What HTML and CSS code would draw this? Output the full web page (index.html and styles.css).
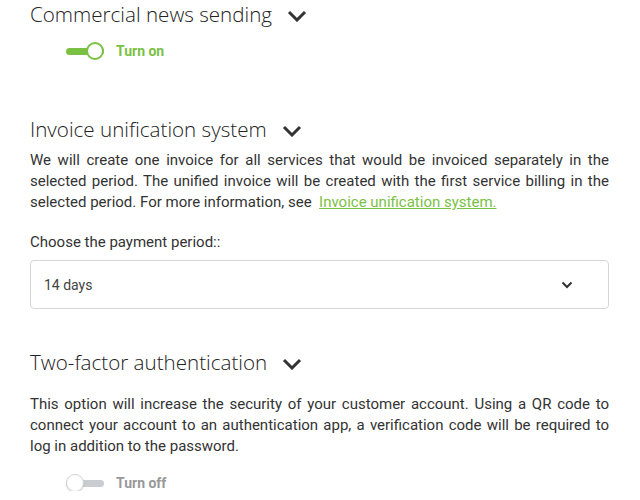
FILE: index.html
```html
<!DOCTYPE html>
<html lang="en">
<head>
    <meta charset="UTF-8">
    <meta name="viewport" content="width=device-width, initial-scale=1.0">
    <title>Account settings</title>
    <link rel="stylesheet" href="styles.css">
</head>
<body>
    <section class="setting" id="news">
        <h2 class="setting-title">Commercial news sending
            <svg class="chevron" viewBox="0 0 20 12" width="20" height="12"><path d="M2 2l8 8 8-8" fill="none" stroke="#333" stroke-width="3"/></svg>
        </h2>
        <label class="switch on">
            <span class="track"><span class="knob"></span></span>
            <span class="switch-label">Turn on</span>
        </label>
    </section>

    <section class="setting" id="invoice">
        <h2 class="setting-title">Invoice unification system
            <svg class="chevron" viewBox="0 0 20 12" width="20" height="12"><path d="M2 2l8 8 8-8" fill="none" stroke="#333" stroke-width="3"/></svg>
        </h2>
        <p class="text">We will create one invoice for all services that would be invoiced separately in the selected period. The unified invoice will be created with the first service billing in the selected period. For more information, see &nbsp;<a href="#">Invoice unification system.</a></p>
        <div class="field">
            <label for="period">Choose the payment period::</label>
            <div class="select" id="period">
                <span>14 days</span>
                <svg viewBox="0 0 12 8" width="12" height="8"><path d="M1.5 1.5l4.5 4.5 4.5-4.5" fill="none" stroke="#333" stroke-width="2"/></svg>
            </div>
        </div>
    </section>

    <section class="setting" id="twofactor">
        <h2 class="setting-title">Two-factor authentication
            <svg class="chevron" viewBox="0 0 20 12" width="20" height="12"><path d="M2 2l8 8 8-8" fill="none" stroke="#333" stroke-width="3"/></svg>
        </h2>
        <p class="text">This option will increase the security of your customer account. Using a QR code to connect your account to an authentication app, a verification code will be required to log in addition to the password.</p>
        <label class="switch">
            <span class="track"><span class="knob"></span></span>
            <span class="switch-label">Turn off</span>
        </label>
    </section>
</body>
</html>
```

FILE: styles.css
```css
body {
    font-family: Roboto, Arial, sans-serif;
    font-size: 14px;
    color: #333;
    margin: 0;
    padding: 0 31px 0 30px;
}

.setting-title {
    font-family: "Open Sans", sans-serif;
    font-weight: 300;
    font-size: 20.6px;
    color: #222;
    margin: 0;
    line-height: 30px;
    display: flex;
    align-items: center;
}

.chevron {
    margin-left: 15px;
    margin-top: 4px;
}

#news .setting-title {
    margin-top: -1px;
}

#invoice {
    margin-top: 55px;
}

#twofactor {
    margin-top: 38px;
}

.text {
    margin: 6px 0 0;
    font-size: 15px;
    line-height: 21px;
    text-align: justify;
}

#twofactor .text {
    margin-top: 17px;
}

.text a {
    color: #7ac143;
}

.switch {
    display: flex;
    align-items: center;
    margin: 14px 0 0 36px;
}

#twofactor .switch {
    margin-top: 18px;
}

.track {
    width: 38px;
    height: 7px;
    border-radius: 4px;
    background: #c9ccd0;
    position: relative;
    display: inline-block;
}

.knob {
    position: absolute;
    top: -6px;
    left: 0;
    width: 16px;
    height: 16px;
    border-radius: 50%;
    background: #fff;
    border: 1px solid #d4d4d4;
    box-shadow: 0 1px 2px rgba(0, 0, 0, 0.15);
}

.switch.on .track {
    background: #7ac143;
}

.switch.on .knob {
    left: auto;
    right: 0;
    border: 2px solid #7ac143;
    width: 14px;
    height: 14px;
    box-shadow: none;
}

.switch-label {
    margin-left: 12px;
    font-weight: bold;
    color: #999;
}

.switch.on .switch-label {
    color: #7ac143;
}

.field {
    margin-top: 20px;
}

.field label {
    display: block;
    font-size: 15px;
    line-height: 18px;
    margin-bottom: 9px;
}

.select {
    border: 1px solid #d6d6d6;
    border-radius: 4px;
    height: 47px;
    display: flex;
    align-items: center;
    justify-content: space-between;
    padding: 0 35px 0 13px;
    color: #444;
}
```
